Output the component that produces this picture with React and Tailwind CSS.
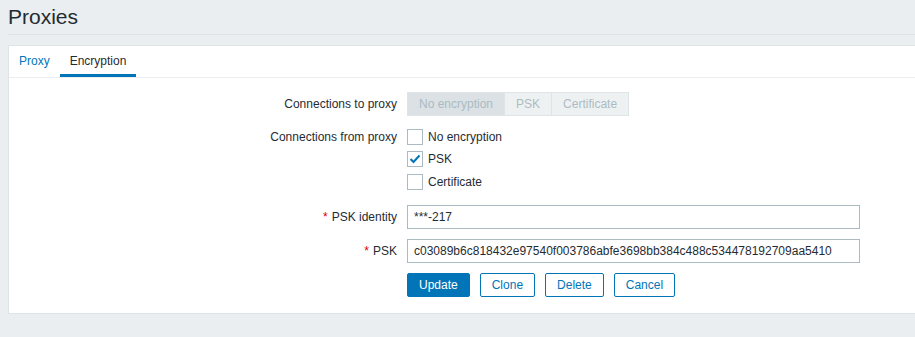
import React from "react";

function Checkbox({ checked, label }) {
  return (
    <div className="flex items-center h-[16px]">
      <span className="w-[16px] h-[16px] border border-[#acbbc2] bg-white flex items-center justify-center shrink-0">
        {checked && (
          <svg width="12" height="10" viewBox="0 0 12 10">
            <polyline points="1.5,5 4.5,8 10.5,1.5" fill="none" stroke="#0275b8" strokeWidth="2" />
          </svg>
        )}
      </span>
      <span className="ml-[5px] leading-[14px]">{label}</span>
    </div>
  );
}

function Label({ children, req }) {
  return (
    <div className="w-[398px] pr-[10px] text-right shrink-0 leading-[14px]">
      {req && <span className="text-[#d40000] mr-[4px]">*</span>}
      {children}
    </div>
  );
}

export default function App() {
  return (
    <div
      className="w-[915px] h-[337px] overflow-hidden bg-[#ebeef0] text-[12px] text-[#1f2c33]"
      style={{ fontFamily: '"Liberation Sans", Arial, sans-serif' }}
    >
      <div className="ml-2 h-[35px] border-b border-[#dde3e6] pt-[6px]">
        <h1 className="text-[21px] leading-[21px] text-[#1f2c33]">Proxies</h1>
      </div>
      <div className="ml-2 mt-[10px] w-[920px] h-[269px] border border-[#dfe4e7] bg-white">
        <div className="flex border-b border-[#ebeef0] pl-0">
          <div className="px-[10px] pt-[8px] pb-[6px] leading-[14px] border-b-[3px] border-transparent text-[#0275b8]">
            Proxy
          </div>
          <div className="px-[10px] pt-[8px] pb-[6px] leading-[14px] border-b-[3px] border-[#0275b8] text-[#1f2c33]">
            Encryption
          </div>
        </div>
        <div className="pt-[14px]">
          <div className="flex items-center h-[24px]">
            <Label>Connections to proxy</Label>
            <div className="flex h-[24px] border border-[#dfe4e7] text-[#acbbc2] leading-[22px]">
              <span className="px-[11px] bg-[#dbe1e5]">No encryption</span>
              <span className="px-[11px] bg-[#eef1f2] border-l border-[#dfe4e7]">PSK</span>
              <span className="px-[11px] bg-[#eef1f2] border-l border-[#dfe4e7]">Certificate</span>
            </div>
          </div>
          <div className="flex items-start mt-[13px]">
            <div className="h-[16px] flex items-center">
              <Label>Connections from proxy</Label>
            </div>
            <div className="flex flex-col">
              <Checkbox label="No encryption" />
              <div className="mt-[6px]">
                <Checkbox checked label="PSK" />
              </div>
              <div className="mt-[7px]">
                <Checkbox label="Certificate" />
              </div>
            </div>
          </div>
          <div className="flex items-center mt-[15px]">
            <Label req>PSK identity</Label>
            <div className="w-[453px] h-[24px] border border-[#acbbc2] px-[6px] leading-[22px]">***-217</div>
          </div>
          <div className="flex items-center mt-[10px]">
            <Label req>PSK</Label>
            <div className="w-[453px] h-[24px] border border-[#acbbc2] px-[6px] leading-[22px]">
              c03089b6c818432e97540f003786abfe3698bb384c488c534478192709aa5410
            </div>
          </div>
          <div className="flex items-center mt-[10px]">
            <div className="w-[398px] shrink-0" />
            <div className="flex gap-[10px]">
              <button className="h-[24px] px-[11px] border border-[#0275b8] bg-[#0275b8] text-white leading-[22px] rounded-[2px]">
                Update
              </button>
              <button className="h-[24px] px-[11px] border border-[#0275b8] bg-white text-[#0275b8] leading-[22px] rounded-[2px]">
                Clone
              </button>
              <button className="h-[24px] px-[11px] border border-[#0275b8] bg-white text-[#0275b8] leading-[22px] rounded-[2px]">
                Delete
              </button>
              <button className="h-[24px] px-[11px] border border-[#0275b8] bg-white text-[#0275b8] leading-[22px] rounded-[2px]">
                Cancel
              </button>
            </div>
          </div>
        </div>
      </div>
    </div>
  );
}
